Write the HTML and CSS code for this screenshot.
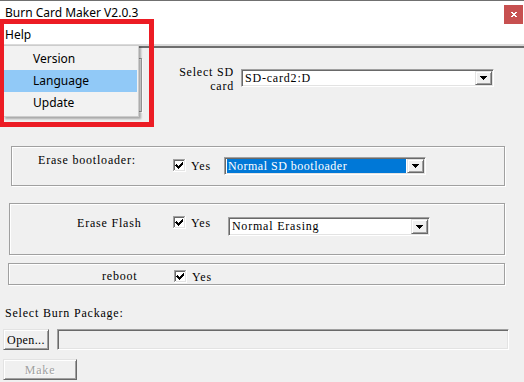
FILE: index.html
```html
<!DOCTYPE html>
<html lang="en">
<head>
    <meta charset="UTF-8">
    <title>Burn Card Maker V2.0.3</title>
    <link rel="stylesheet" href="styles.css">
</head>
<body>
<div class="window">

    <!-- title bar -->
    <header class="titlebar">
        <span class="title">Burn Card Maker V2.0.3</span>
        <span class="close">
            <svg width="6" height="5" viewBox="0 0 6 5" shape-rendering="crispEdges"><path fill="#fff" d="M0 0h2v1h2v-1h2v1h-1v1h-1v1h1v1h1v1h-2v-1h-2v1h-2v-1h1v-1h1v-1h-1v-1h-1z"/></svg>
        </span>
    </header>

    <nav class="menubar"><span class="menubar-item">Help</span></nav>

    <main class="client">

        <div class="sd-row">
            <div class="group back-group"></div>
            <div class="sd-label">
                <span class="lbl">Select SD</span>
                <span class="lbl">card</span>
            </div>
            <div class="combo sd-combo">
                <span class="combo-text">SD-card2:D</span>
                <span class="combo-btn"><svg width="7" height="4" viewBox="0 0 7 4" shape-rendering="crispEdges"><path d="M0 0h7v1h-1v1h-1v1h-1v1h-1v-1h-1v-1h-1v-1h-1z"/></svg></span>
            </div>
        </div>

        <section class="group boot-group">
            <span class="lbl boot-label">Erase bootloader:</span>
            <span class="chk boot-chk">
                <svg class="box" width="13" height="13" viewBox="0 0 13 13" shape-rendering="crispEdges"><rect width="13" height="13" fill="#fff"/><path fill="none" stroke="#a0a0a0" d="M0.5 12V0.5H12"/><path fill="none" stroke="#696969" d="M1.5 11V1.5H11"/><path fill="none" stroke="#e3e3e3" d="M1.5 11.5H11.5V1"/><path d="M3 5h1v1h1v1h1v-1h1v-1h1v-1h1v-1h1v3h-1v1h-1v1h-1v1h-1v1h-1v-1h-1v-1h-1v-1h-1z"/></svg>
                <span class="lbl">Yes</span>
            </span>
            <div class="combo boot-combo">
                <span class="combo-text sel">Normal SD bootloader</span>
                <span class="combo-btn"><svg width="7" height="4" viewBox="0 0 7 4" shape-rendering="crispEdges"><path d="M0 0h7v1h-1v1h-1v1h-1v1h-1v-1h-1v-1h-1v-1h-1z"/></svg></span>
            </div>
        </section>

        <section class="group flash-group">
            <span class="lbl flash-label">Erase Flash</span>
            <span class="chk flash-chk">
                <svg class="box" width="13" height="13" viewBox="0 0 13 13" shape-rendering="crispEdges"><rect width="13" height="13" fill="#fff"/><path fill="none" stroke="#a0a0a0" d="M0.5 12V0.5H12"/><path fill="none" stroke="#696969" d="M1.5 11V1.5H11"/><path fill="none" stroke="#e3e3e3" d="M1.5 11.5H11.5V1"/><path d="M3 5h1v1h1v1h1v-1h1v-1h1v-1h1v-1h1v3h-1v1h-1v1h-1v1h-1v1h-1v-1h-1v-1h-1v-1h-1z"/></svg>
                <span class="lbl">Yes</span>
            </span>
            <div class="combo flash-combo">
                <span class="combo-text">Normal Erasing</span>
                <span class="combo-btn"><svg width="7" height="4" viewBox="0 0 7 4" shape-rendering="crispEdges"><path d="M0 0h7v1h-1v1h-1v1h-1v1h-1v-1h-1v-1h-1v-1h-1z"/></svg></span>
            </div>
        </section>

        <section class="group reboot-group">
            <span class="lbl reboot-label">reboot</span>
            <span class="chk reboot-chk">
                <svg class="box" width="13" height="13" viewBox="0 0 13 13" shape-rendering="crispEdges"><rect width="13" height="13" fill="#fff"/><path fill="none" stroke="#a0a0a0" d="M0.5 12V0.5H12"/><path fill="none" stroke="#696969" d="M1.5 11V1.5H11"/><path fill="none" stroke="#e3e3e3" d="M1.5 11.5H11.5V1"/><path d="M3 5h1v1h1v1h1v-1h1v-1h1v-1h1v-1h1v3h-1v1h-1v1h-1v1h-1v1h-1v-1h-1v-1h-1v-1h-1z"/></svg>
                <span class="lbl">Yes</span>
            </span>
        </section>

        <div class="lbl pkg-label">Select Burn Package:</div>

        <div class="open-row">
            <span class="btn open-btn">Open...</span>
            <span class="field"></span>
        </div>

        <span class="btn make-btn disabled">Make</span>
    </main>

    <!-- popup menu + annotation frame lie over the window -->
    <ul class="popup">
        <li>Version</li>
        <li class="hot">Language</li>
        <li>Update</li>
    </ul>
    <div class="mark"></div>
</div>
</body>
</html>
```

FILE: styles.css
```css
/* Burn Card Maker - classic win32 dialog look */
* { margin: 0; padding: 0; box-sizing: border-box; }

html, body {
    width: 524px;
    height: 382px;
    overflow: hidden;
    background: #f0f0f0;
}

body { font-family: "Liberation Serif", serif; color: #000; }

.window {
    position: relative;
    width: 524px;
    height: 382px;
    display: flex;
    flex-direction: column;
}

/* title + menu */
.titlebar {
    display: flex;
    align-items: flex-start;
    height: 25px;
    padding-left: 5px;
    background: #fff;
    border-top: 1px solid #707070;
}
.title {
    margin-top: 4px;
    font: 12px/16px "Noto Sans", sans-serif;
}
.close {
    display: flex;
    align-items: center;
    justify-content: center;
    width: 19px;
    height: 19px;
    margin: 4px 1px 0 auto;
    background: #c75050;
}

.menubar {
    height: 21px;
    padding: 2px 0 0 5px;
    background: #fff;
    border-bottom: 2px solid #dadada;
    font: 12px/16px "Noto Sans", sans-serif;
}

.client {
    flex: 1;
    display: flex;
    flex-direction: column;
    align-items: flex-start;
    border-top: 2px solid #6e6e6e;
}

/* bitmap-ish dialog text */
.lbl, .combo-text, .btn {
    font-size: 12px;
    line-height: 12px;
    letter-spacing: 0.8px;
    white-space: nowrap;
}

/* etched group frame */
.group {
    display: flex;
    align-items: flex-start;
    border: 1px solid #a0a0a0;
    box-shadow: inset 1px 1px 0 #fff, 1px 1px 0 #fff;
}

/* sunken combo */
.combo {
    display: flex;
    padding: 1px;
    background: #fff;
    border: 1px solid;
    border-color: #a0a0a0 #fff #fff #a0a0a0;
    box-shadow: inset 1px 1px 0 #696969, inset -1px -1px 0 #e3e3e3;
}
.combo-text {
    flex: 1;
    padding: 1px 0 0 2px;
    line-height: 13px;
}
.combo-text.sel {
    margin: 0 1px;
    padding-left: 1px;
    background: #0078d7;
    color: #fff;
    letter-spacing: 0.5px;
}
.combo-btn {
    display: flex;
    align-items: center;
    justify-content: center;
    width: 17px;
    background: #f0f0f0;
    border: 1px solid;
    border-color: #e3e3e3 #696969 #696969 #e3e3e3;
    box-shadow: inset 1px 1px 0 #fff, inset -1px -1px 0 #a0a0a0;
}

.chk { display: flex; align-items: center; }
.chk .lbl { margin-left: 5px; }

/* row 1 */
.sd-row { display: flex; align-items: flex-start; margin-top: 10px; }
.back-group { width: 134px; height: 54px; margin-left: 8px; }
.sd-label {
    display: flex;
    flex-direction: column;
    align-items: flex-end;
    width: 56px;
    margin: 8px 0 0 36px;
}
.sd-label .lbl { height: 13.5px; line-height: 13.5px; }
.sd-combo { width: 253px; height: 18px; margin: 11px 0 0 7px; }

/* bootloader */
.boot-group { width: 494px; height: 40px; margin: 34px 0 0 11px; }
.boot-label { width: 102px; margin: 7px 0 0 26px; }
.boot-chk { margin: 12px 0 0 33px; }
.boot-combo { width: 202px; height: 18px; margin: 10px 0 0 13px; }

/* flash */
.flash-group { width: 496px; height: 52px; margin: 17px 0 0 9px; }
.flash-label { width: 66px; margin: 13px 0 0 67px; }
.flash-chk { margin: 12px 0 0 30px; }
.flash-combo { width: 202px; height: 19px; margin: 13px 0 0 17px; }

/* reboot */
.reboot-group { width: 497px; height: 22px; margin: 8px 0 0 8px; }
.reboot-label { width: 36px; margin: 6px 0 0 93px; }
.reboot-chk { margin: 6px 0 0 36px; }

/* package */
.pkg-label { margin: 22px 0 0 5px; }

.open-row { display: flex; margin-top: 10px; }

.btn {
    display: flex;
    align-items: center;
    justify-content: center;
    height: 21px;
    background: #f0f0f0;
    border: 1px solid;
    border-color: #e3e3e3 #696969 #696969 #e3e3e3;
    box-shadow: inset 1px 1px 0 #fff, inset -1px -1px 0 #a0a0a0;
}
.open-btn { width: 46px; margin-left: 3px; letter-spacing: 0.4px; }
.field {
    width: 452px;
    height: 21px;
    margin-left: 8px;
    border: 1px solid;
    border-color: #a0a0a0 #fff #fff #a0a0a0;
    box-shadow: inset 1px 1px 0 #696969, inset -1px -1px 0 #e3e3e3;
}
.make-btn { width: 74px; margin: 9px 0 0 3px; }
.btn.disabled { color: #a0a0a0; text-shadow: 1px 1px 0 #fff; }

/* popup menu over the form */
.popup {
    position: absolute;
    left: 3px;
    top: 45px;
    width: 136px;
    padding: 2px 1px 2px 0;
    list-style: none;
    background: #f2f2f2;
    border: 1px solid #cccccc;
    box-shadow: 2px 2px 2px rgba(0, 0, 0, 0.3);
    font: 12px/22px "Noto Sans", sans-serif;
}
.popup li { height: 22px; padding-left: 29px; }
.popup li.hot { background: #91c9f7; }

/* red highlight frame */
.mark {
    position: absolute;
    left: -1px;
    top: 19px;
    width: 155px;
    height: 108px;
    border: 5px solid #ec1c24;
}
```
